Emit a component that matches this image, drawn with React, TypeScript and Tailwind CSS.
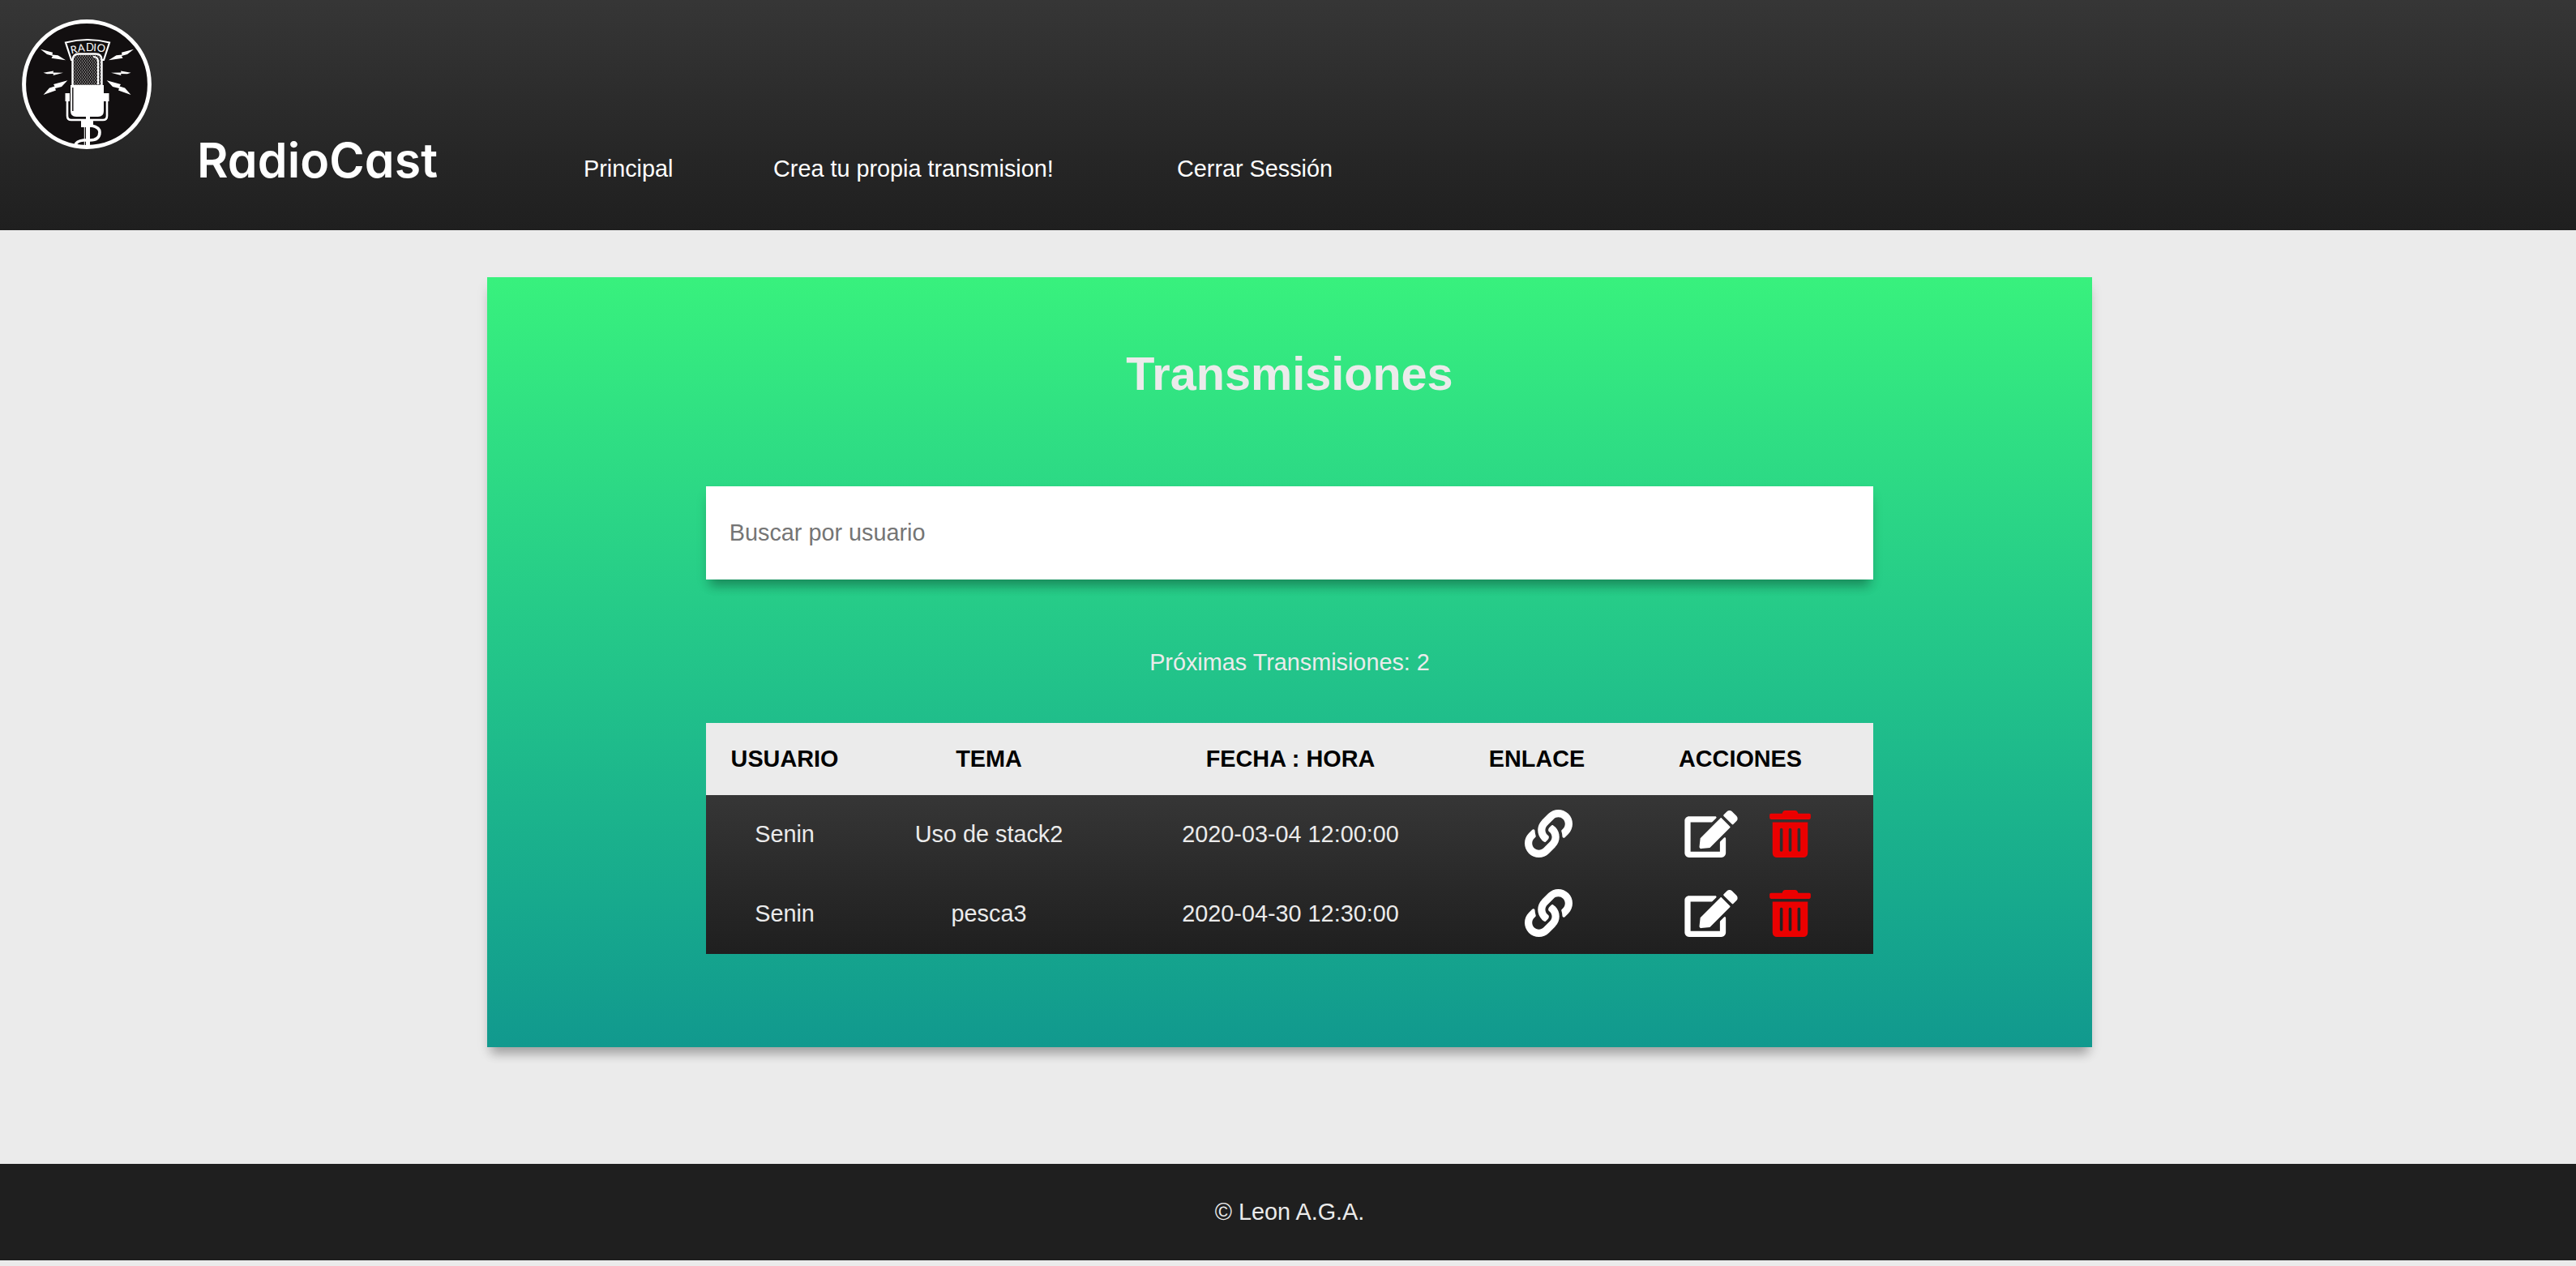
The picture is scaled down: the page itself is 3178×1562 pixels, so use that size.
import React from "react";
import { FaEdit, FaLink, FaTrashAlt } from "react-icons/fa";

const shows = [
  { user: "Senin", topic: "Uso de stack2", date: "2020-03-04 12:00:00" },
  { user: "Senin", topic: "pesca3", date: "2020-04-30 12:30:00" },
];

function Bolts({ transform }: { transform?: string }) {
  return (
    <g transform={transform} fill="#fff">
      <path d="M23 36.700 L38 40.700 L37.500 43.500 L44.500 44.200 L54 50.200 L36.500 47.700 L38 45 L31 43 Z" />
      <path d="M26.500 65.700 L39 63.500 L38.500 65.500 L51 65.800 L38.500 69 L39 67 L31 67.200 Z" />
      <path d="M56.300 75.300 L39 80 L40.500 82.500 L34 84.500 L26.500 93 L42 87.500 L41 85 L49 83 Z" />
    </g>
  );
}

function Logo() {
  return (
    <svg viewBox="0 0 160 160" className="size-40 shrink-0">
      <defs>
        <pattern id="mesh" width="3" height="4" patternUnits="userSpaceOnUse">
          <rect width="3" height="4" fill="#161314" />
          <circle cx="0.75" cy="1" r="0.66" fill="#c8c8c8" />
          <circle cx="2.25" cy="3" r="0.66" fill="#c8c8c8" />
        </pattern>
      </defs>
      <circle cx="80" cy="80" r="77.4" fill="#120f10" stroke="#fff" strokeWidth="5" />
      <path d="M54 28.5 Q81 21.500 108 28.5 L101 50 H61 Z" fill="#120f10" stroke="#fff" strokeWidth="2.2" />
      <text
        fill="#fff"
        className="font-[Lato,sans-serif]"
        fontSize="13"
        x="61 69.300 79 88 92"
        y="42.500 40.200 39 39 39"
        rotate="-12 -6 0 4 9"
      >
        RADIO
      </text>
      <path d="M62.5 82 V50 Q63 42.500 70 42.500 H91 Q98.500 42.500 98.500 50 V82 Z" fill="url(#mesh)" stroke="#fff" strokeWidth="2.4" />
      <path d="M88 46 Q94 46 94 52 V80" fill="none" stroke="#fff" strokeWidth="2.2" />
      <path d="M60 81 H101 V113 Q101 120 94 120 H67 Q60 120 60 113 Z" fill="#fff" />
      <path d="M62.800 84 V113" stroke="#120f10" strokeWidth="1.4" />
      <path d="M56 92 V119 Q56 124 61 124 H100 Q105 124 105 119 V92" fill="none" stroke="#fff" strokeWidth="2.6" />
      <path d="M53.500 91 H59 V101 H53.500 Z M101 91 H107.500 V101 H101 Z" fill="#fff" />
      <path d="M73 124 H88 V133 H73 Z M79 119 H84 V156 H79 Z" fill="#fff" />
      <path d="M77.300 133 V156" stroke="#fff" strokeWidth="1" />
      <path d="M86 131 Q96 133 96 139 Q96 149 84 149 H76 Q67 150 66 155" fill="none" stroke="#fff" strokeWidth="3.6" />
      <Bolts />
      <Bolts transform="translate(161 0) scale(-1 1)" />
    </svg>
  );
}

export default function App() {
  return (
    <div className="min-h-[1562px] bg-[#ebebeb] font-['Liberation_Sans',Arial,sans-serif] text-[28.8px] leading-[33px] text-white">
      <header className="flex h-[284px] items-start bg-linear-to-b from-[#363636] to-[#1f1f1f] pt-6 pl-[27px]">
        <Logo />
        <div className="mt-[139px] ml-[56px] w-[300px] font-[Inter,sans-serif] text-[59px] leading-[70px] font-semibold tracking-[0.1px] [font-feature-settings:'cv11']">RadioCast</div>
        <nav className="mt-[168px] flex">
          <a className="ml-[177px] w-[234px]">Principal</a>
          <a className="w-[498px]">Crea tu propia transmision!</a>
          <a>Cerrar Sessión</a>
        </nav>
      </header>
      <main className="pt-[58px] pb-[144px] pl-1">
        <section className="mx-auto flex h-[950px] w-[1980px] flex-col items-center bg-linear-to-b from-[#38f17d] to-[#11998e] pt-[86px] text-[#ebebeb] shadow-[0_14px_12px_-6px_rgba(0,0,0,0.24),0_8px_14px_-1px_rgba(0,0,0,0.11)]">
          <h1 className="text-[57.6px] leading-[66px] font-bold">Transmisiones</h1>
          <input
            className="mt-[106px] h-[115px] w-[1440px] bg-white px-[28.8px] text-black shadow-[0_14px_12px_-6px_rgba(0,0,0,0.24),0_8px_14px_-1px_rgba(0,0,0,0.11)] outline-none placeholder:text-[#757575]"
            placeholder="Buscar por usuario"
          />
          <p className="mt-[86px]">Próximas Transmisiones: 2</p>
          <table className="mt-[58px] w-[1440px] table-fixed border-collapse text-center">
            <colgroup>
              <col className="w-[194px]" />
              <col className="w-[310px]" />
              <col className="w-[434px]" />
              <col className="w-[174px]" />
              <col className="w-[328px]" />
            </colgroup>
            <thead className="bg-[#ebebeb] text-black">
              <tr className="h-[89px]">
                <th>USUARIO</th>
                <th>TEMA</th>
                <th>FECHA : HORA</th>
                <th>ENLACE</th>
                <th>ACCIONES</th>
              </tr>
            </thead>
            <tbody className="bg-linear-to-b from-[#363636] to-[#1f1f1f]">
              {shows.map((s) => (
                <tr key={s.topic} className="h-[98px]">
                  <td className="pb-px">{s.user}</td>
                  <td className="pb-px">{s.topic}</td>
                  <td className="pb-px">{s.date}</td>
                  <td className="pb-[3px]">
                    <FaLink className="ml-[72px] h-[59px] w-[59px] text-white" />
                  </td>
                  <td className="pb-[3px]">
                    <div className="flex items-center gap-[39px] pl-[95px]">
                      <FaEdit className="h-[58px] w-[66px] text-white" />
                      <FaTrashAlt className="h-[58px] w-[51px] text-[#eb0000]" />
                    </div>
                  </td>
                </tr>
              ))}
            </tbody>
          </table>
        </section>
      </main>
      <footer className="flex h-[119px] items-center justify-center bg-[#1f1f1f] pl-1 text-[#ebebeb]">© Leon A.G.A.</footer>
    </div>
  );
}
